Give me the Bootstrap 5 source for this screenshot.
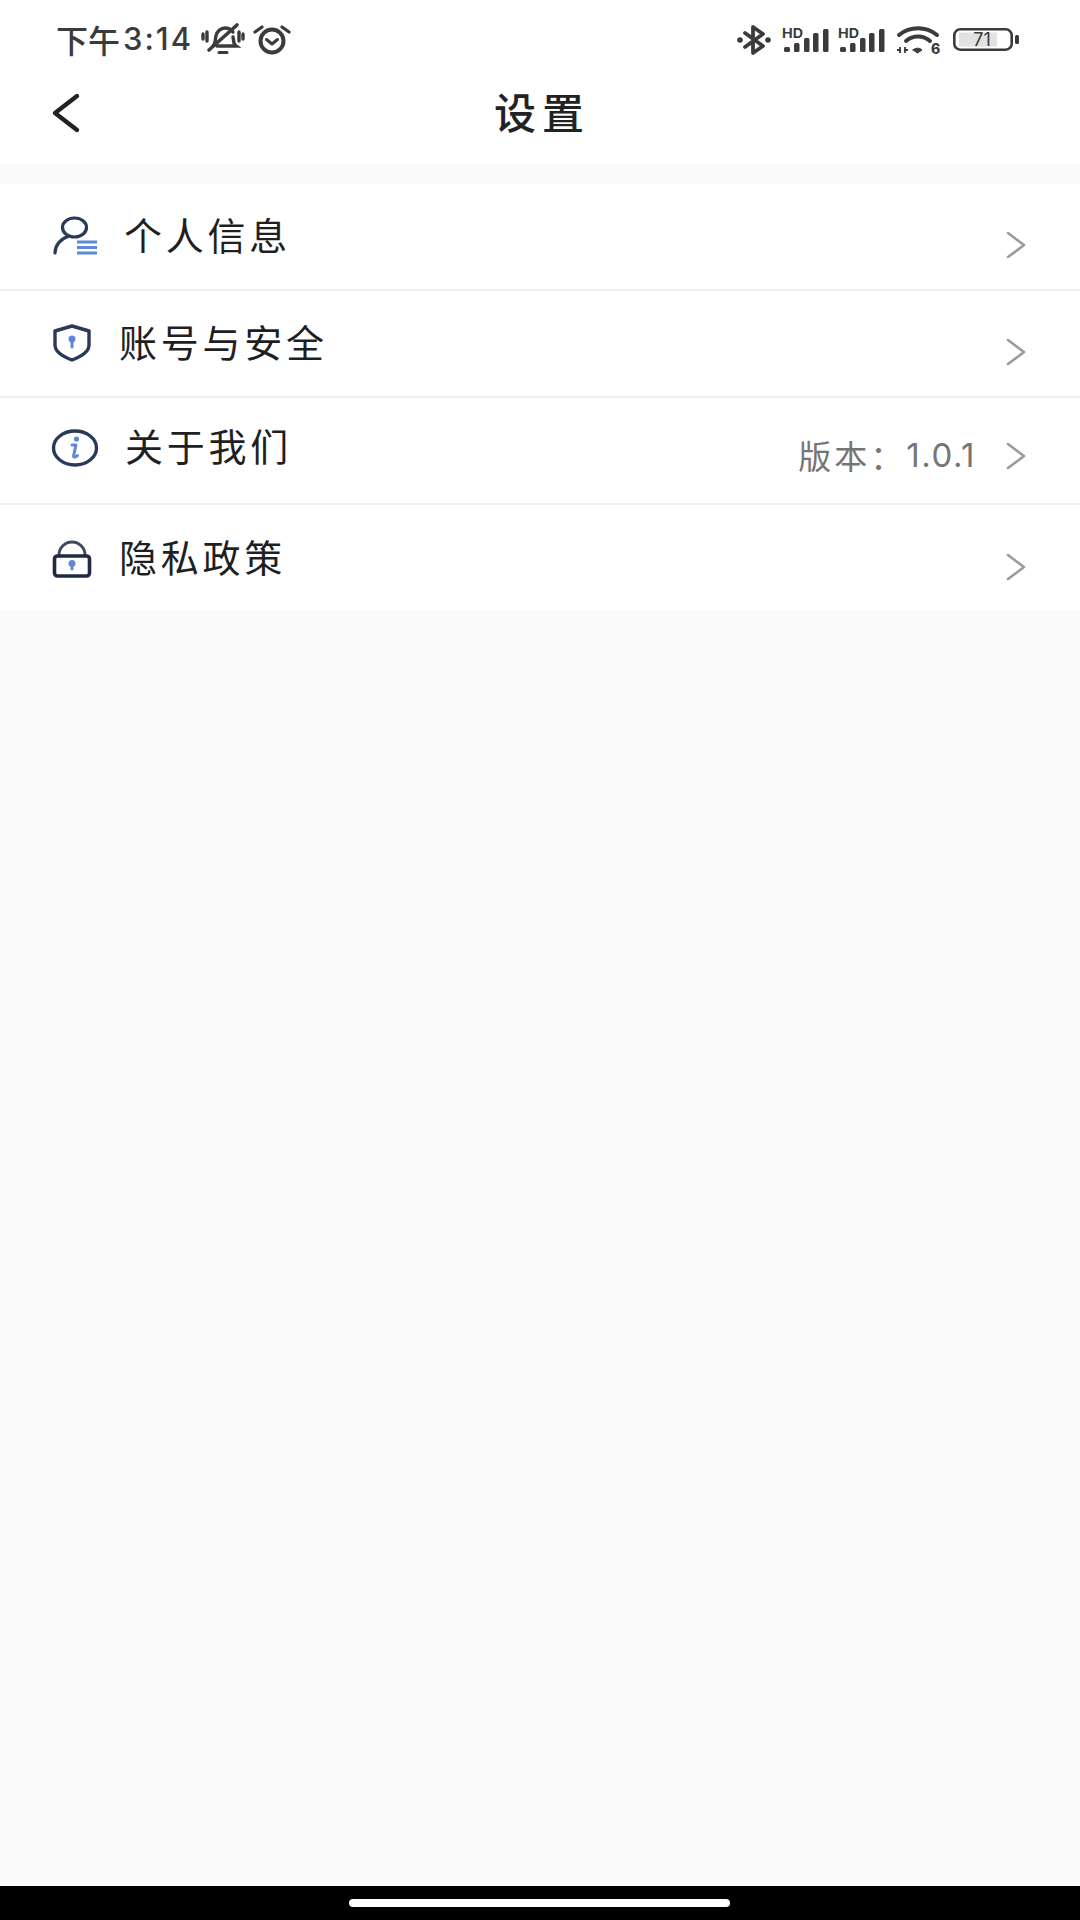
<!doctype html>
<html lang="zh">
<head>
<meta charset="utf-8">
<title>设置</title>
<link rel="stylesheet" href="https://cdn.jsdelivr.net/npm/bootstrap@5.3.0/dist/css/bootstrap.min.css">
<style>
  html, body { height: 100%; }
  body { background: #fafafa; font-family: "Noto Sans CJK SC", "Noto Sans", sans-serif; color: #1f1f1f; }
  .screen { height: 1920px; }
  .status-strip { height: 80px; padding: 0 61px 0 56px; color: #3b3b3b; }
  .clock { display: flex; align-items: center; margin: 0 8px 3px 0; line-height: 1; }
  .clock-day { font-size: 32px; font-weight: 500; margin-right: 3px; }
  .clock-time { font-family: Inter, sans-serif; font-size: 31px; font-weight: 500; letter-spacing: 2px; }
  .status-glyph { margin-bottom: 2px; }
  .title-strip { height: 84px; padding-bottom: 22px; }
  .page-title { font-size: 42px; font-weight: 500; letter-spacing: 6px; line-height: 1; margin: 0 0 0 4px; color: #222; }
  .back-arrow { left: 50px; top: 13px; }
  .menu-group { margin-top: 20px; }
  .menu-row { height: 107px; padding: 0 54px 0 52px; border-bottom: 2px solid #eeeeee; font-size: 38px; letter-spacing: 3.75px; line-height: 1; }
  .menu-row:last-child { height: 105px; border-bottom: 0; }
  .row-icon { margin-bottom: var(--lift); }
  .row-label { margin-bottom: var(--shift); }
  .row-trail { margin-top: var(--trail); font-size: 33px; letter-spacing: 3px; color: #757575; }
  .version-num { font-family: Inter, sans-serif; font-size: 33px; letter-spacing: 1.5px; margin-right: 30px; }
  .gesture-strip { height: 34px; background: #000; }
  .gesture-pill { width: 381px; height: 8px; margin-right: 1px; background: #fff; border-radius: 4px; }
  svg { display: block; flex-shrink: 0; overflow: visible; }
</style>
</head>
<body>
<div class="screen d-flex flex-column">
  <header class="bg-white">
    <div class="status-strip d-flex align-items-center">
      <span class="clock"><span class="clock-day">下午</span><span class="clock-time">3:14</span></span>
      <!-- muted bell -->
      <svg class="status-glyph" width="44" height="32" viewBox="0 0 44 32" fill="none" stroke="#3b3b3b" stroke-width="3.400" stroke-linecap="round">
        <path d="M12 23c3-3 2-7 3-10 1-5 5-8 9-8 3 0 6 1 8 4M32 14c1 4 0 7 3 9H16"/>
        <path d="M8 27 36 2" stroke-width="3.600"/>
        <path d="M2 11v5M6 9v9M38 9v9M42 11v5"/>
        <path d="M18 29.500h8" stroke-width="3"/>
      </svg>
      <!-- alarm clock -->
      <svg class="status-glyph ms-2" style="margin-left:11px" width="38" height="30" viewBox="0 0 38 30" fill="none" stroke="#3b3b3b" stroke-linecap="round" stroke-linejoin="round">
        <circle cx="19" cy="17" r="11.500" stroke-width="4"/>
        <path d="M13.500 15.500 19 20l5.500-4.500" stroke-width="3"/>
        <path d="M2 8 9 3M36 8l-7-5" stroke-width="3.200"/>
      </svg>
      <div class="ms-auto d-flex align-items-center">
        <!-- bluetooth -->
        <svg width="34" height="30" viewBox="0 0 34 30" fill="none" stroke="#3b3b3b" stroke-width="3.800" stroke-linejoin="round" stroke-linecap="round">
          <path d="M8 8 26 21 16 28V2l10 7L8 22"/>
          <circle cx="3" cy="15" r="2.800" fill="#3b3b3b" stroke="none"/>
          <circle cx="31" cy="15" r="2.800" fill="#3b3b3b" stroke="none"/>
        </svg>
        <!-- HD cellular signal, first SIM -->
        <svg style="margin-left:11px" width="46" height="24" viewBox="0 0 46 24" fill="#3b3b3b">
          <text x="0" y="9.500" font-family="Inter, sans-serif" font-size="13" font-weight="700" textLength="21" lengthAdjust="spacingAndGlyphs">HD</text>
          <rect x="2" y="19" width="6" height="5" rx="1.500"/><rect x="12" y="15" width="5.500" height="9" rx="1.500"/><rect x="22" y="10" width="5.500" height="14" rx="1.500"/><rect x="31" y="5" width="5.500" height="19" rx="1.500"/><rect x="41" y="1" width="5.500" height="23" rx="1.500"/>
        </svg>
        <!-- HD cellular signal, second SIM -->
        <svg width="46" height="24" viewBox="0 0 46 24" fill="#3b3b3b" style="margin-left:10px">
          <text x="0" y="9.500" font-family="Inter, sans-serif" font-size="13" font-weight="700" textLength="21" lengthAdjust="spacingAndGlyphs">HD</text>
          <rect x="2" y="19" width="6" height="5" rx="1.500"/><rect x="12" y="15" width="5.500" height="9" rx="1.500"/><rect x="22" y="10" width="5.500" height="14" rx="1.500"/><rect x="31" y="5" width="5.500" height="19" rx="1.500"/><rect x="41" y="1" width="5.500" height="23" rx="1.500"/>
        </svg>
        <!-- wifi 6 -->
        <svg width="44" height="28" viewBox="0 0 44 28" fill="none" stroke="#3b3b3b" stroke-width="4" stroke-linecap="round" style="margin-left:12px">
          <path d="M3 9c11-9 27-9 38 0"/>
          <path d="M10 15c7-6 17-6 24 0"/>
          <path d="M17 24 21.500 27 26 24c-2.500-2.500-6.500-2.500-9 0Z" fill="#3b3b3b" stroke-width="1"/>
          <path d="M4 21v6M9 21v6M1 24h4M8 24h4" stroke-width="1.800" stroke-linecap="butt"/>
          <text x="35" y="27.500" font-family="Inter, sans-serif" font-size="14" font-weight="800" fill="#3b3b3b" stroke="none">6</text>
        </svg>
        <!-- battery -->
        <svg width="66" height="24" viewBox="0 0 66 24" style="margin-left:13px">
          <rect x="1.300" y="1.300" width="57.400" height="20.400" rx="6" fill="#fff" stroke="#3b3b3b" stroke-width="2.600"/>
          <rect x="6" y="4.500" width="38" height="14" fill="#e2e2e2"/>
          <text x="29" y="18" text-anchor="middle" font-family="Inter, sans-serif" font-size="18" fill="#3b3b3b">71</text>
          <rect x="62" y="7" width="4" height="9" rx="1.500" fill="#3b3b3b"/>
        </svg>
      </div>
    </div>
    <nav class="title-strip position-relative d-flex align-items-center justify-content-center">
      <svg class="back-arrow position-absolute" width="32" height="40" viewBox="0 0 32 40" fill="none" stroke="#222" stroke-width="4.400" stroke-linecap="round" stroke-linejoin="round">
        <path d="M27 3 5 20l22 17"/>
      </svg>
      <h1 class="page-title">设置</h1>
    </nav>
  </header>

  <main class="menu-group bg-white">
    <a class="menu-row d-flex align-items-center text-decoration-none text-reset" href="#">
      <!-- person with list lines -->
      <svg class="row-icon" style="--lift:2px" width="46" height="40" viewBox="0 0 46 40" fill="none" stroke-linecap="round">
        <ellipse cx="22.500" cy="11.500" rx="12" ry="9.500" stroke="#29395a" stroke-width="3.200"/>
        <path d="M3 37c0-7 5-14 13-16.500" stroke="#29395a" stroke-width="3.200"/>
        <path d="M25 26h20M25 31.500h20M25 37h20" stroke="#5f88d6" stroke-width="2.800" stroke-linecap="butt"/>
      </svg>
      <span class="row-label" style="--shift:6px;margin-left:26px">个人信息</span>
      <span class="row-trail ms-auto" style="--trail:16px">
        <svg width="20" height="28" viewBox="0 0 20 28" fill="none" stroke="#9b9b9b" stroke-width="2.600" stroke-linecap="round" stroke-linejoin="round"><path d="M2 2 18 14 2 26"/></svg>
      </span>
    </a>
    <a class="menu-row d-flex align-items-center text-decoration-none text-reset" href="#">
      <!-- shield with keyhole -->
      <svg class="row-icon" style="--lift:2px" width="40" height="38" viewBox="0 0 40 38" fill="none">
        <path d="M20 2 37 7v14c0 7-9 12-17 15C12 33 3 28 3 21V7Z" stroke="#29395a" stroke-width="3.400" stroke-linejoin="round"/>
        <circle cx="20" cy="15" r="3.500" fill="#5f88d6"/>
        <path d="M20 15v8" stroke="#5f88d6" stroke-width="3" stroke-linecap="round"/>
      </svg>
      <span class="row-label" style="--shift:6px;margin-left:27px">账号与安全</span>
      <span class="row-trail ms-auto" style="--trail:16px">
        <svg width="20" height="28" viewBox="0 0 20 28" fill="none" stroke="#9b9b9b" stroke-width="2.600" stroke-linecap="round" stroke-linejoin="round"><path d="M2 2 18 14 2 26"/></svg>
      </span>
    </a>
    <a class="menu-row d-flex align-items-center text-decoration-none text-reset" href="#">
      <!-- information badge -->
      <svg class="row-icon" style="--lift:6px" width="46" height="38" viewBox="0 0 46 38" fill="none">
        <ellipse cx="23" cy="19" rx="21.500" ry="17" stroke="#29395a" stroke-width="3.400"/>
        <circle cx="24.500" cy="10" r="2.600" fill="#5f88d6"/>
        <path d="M20 16h4l-2.500 11c0 1.500 2 1.500 4-.5" stroke="#5f88d6" stroke-width="3" stroke-linecap="round" stroke-linejoin="round"/>
      </svg>
      <span class="row-label" style="--shift:12px;margin-left:27px">关于我们</span>
      <span class="row-trail ms-auto d-flex align-items-center" style="--trail:10px">
        <span>版本：</span><span class="version-num">1.0.1</span>
        <svg width="20" height="28" viewBox="0 0 20 28" fill="none" stroke="#9b9b9b" stroke-width="2.600" stroke-linecap="round" stroke-linejoin="round"><path d="M2 2 18 14 2 26"/></svg>
      </span>
    </a>
    <a class="menu-row d-flex align-items-center text-decoration-none text-reset" href="#">
      <!-- padlock -->
      <svg class="row-icon mt-1" style="--lift:0px" width="40" height="38" viewBox="0 0 40 38" fill="none">
        <path d="M7 14a13 13 0 0 1 26 0" stroke="#3f4960" stroke-width="3"/>
        <rect x="2.500" y="15" width="35" height="20" rx="3" stroke="#1f2a44" stroke-width="3.600"/>
        <circle cx="20" cy="22.500" r="3.500" fill="#5f88d6"/>
        <path d="M20 22.500v5.500" stroke="#5f88d6" stroke-width="3" stroke-linecap="round"/>
      </svg>
      <span class="row-label" style="--shift:4px;margin-left:27px">隐私政策</span>
      <span class="row-trail ms-auto" style="--trail:18px">
        <svg width="20" height="28" viewBox="0 0 20 28" fill="none" stroke="#9b9b9b" stroke-width="2.600" stroke-linecap="round" stroke-linejoin="round"><path d="M2 2 18 14 2 26"/></svg>
      </span>
    </a>
  </main>

  <div class="flex-grow-1"></div>
  <footer class="gesture-strip d-flex align-items-center justify-content-center">
    <div class="gesture-pill"></div>
  </footer>
</div>
<script src="https://cdn.jsdelivr.net/npm/bootstrap@5.3.0/dist/js/bootstrap.bundle.min.js"></script>
</body>
</html>
